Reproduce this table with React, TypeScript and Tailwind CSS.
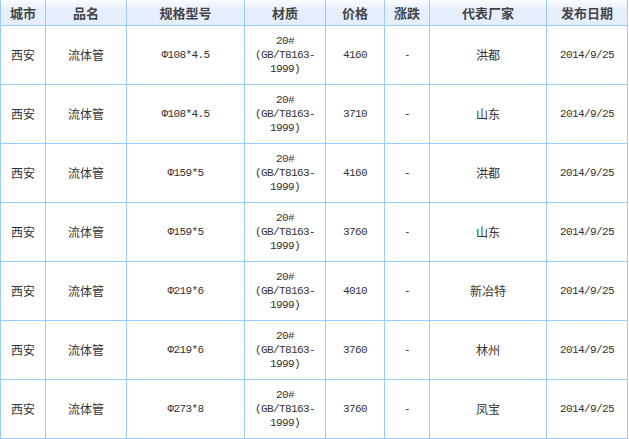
const headers = ["城市", "品名", "规格型号", "材质", "价格", "涨跌", "代表厂家", "发布日期"];

const rows = [
  { spec: "Φ108*4.5", price: "4160", maker: "洪都" },
  { spec: "Φ108*4.5", price: "3710", maker: "山东" },
  { spec: "Φ159*5", price: "4160", maker: "洪都" },
  { spec: "Φ159*5", price: "3760", maker: "山东" },
  { spec: "Φ219*6", price: "4010", maker: "新冶特" },
  { spec: "Φ219*6", price: "3760", maker: "林州" },
  { spec: "Φ273*8", price: "3760", maker: "凤宝" },
];

const cjk = "font-['Noto_Sans_CJK_SC',sans-serif] text-[12px]";
const mono =
  "font-['Liberation_Mono','Noto_Sans_CJK_SC',monospace] text-[11px] tracking-[-0.6px]";

function Cell({ children, className = "" }: { children: React.ReactNode; className?: string }) {
  return (
    <div className={`flex items-center justify-center bg-white text-center text-[#333] ${className}`}>
      {children}
    </div>
  );
}

export default function App() {
  return (
    <div className="w-[629px] h-[439px] bg-white">
      <div className="grid w-[628px] grid-cols-[44px_80px_117px_80px_58px_44px_116px_80px] grid-rows-[25px_repeat(7,58px)] gap-px border-x border-b border-[#99ccff] bg-[#99ccff]">
        {headers.map((h) => (
          <div
            key={h}
            className="flex items-center justify-center bg-linear-to-b from-[#fbfdff] from-0% to-[#e5eefc] to-40% font-['Noto_Sans_CJK_SC',sans-serif] text-[13px] font-bold text-[#444]"
          >
            {h}
          </div>
        ))}
        {rows.map((r, i) => (
          <div key={i} className="contents">
            <Cell className={cjk}>西安</Cell>
            <Cell className={cjk}>流体管</Cell>
            <Cell className={mono}>{r.spec}</Cell>
            <Cell className={`${mono} leading-[14px]`}>
              <div>
                20#
                <br />
                (GB/T8163-
                <br />
                1999)
              </div>
            </Cell>
            <Cell className={mono}>{r.price}</Cell>
            <Cell className={mono}>-</Cell>
            <Cell className={cjk}>{r.maker}</Cell>
            <Cell className={mono}>2014/9/25</Cell>
          </div>
        ))}
      </div>
    </div>
  );
}
